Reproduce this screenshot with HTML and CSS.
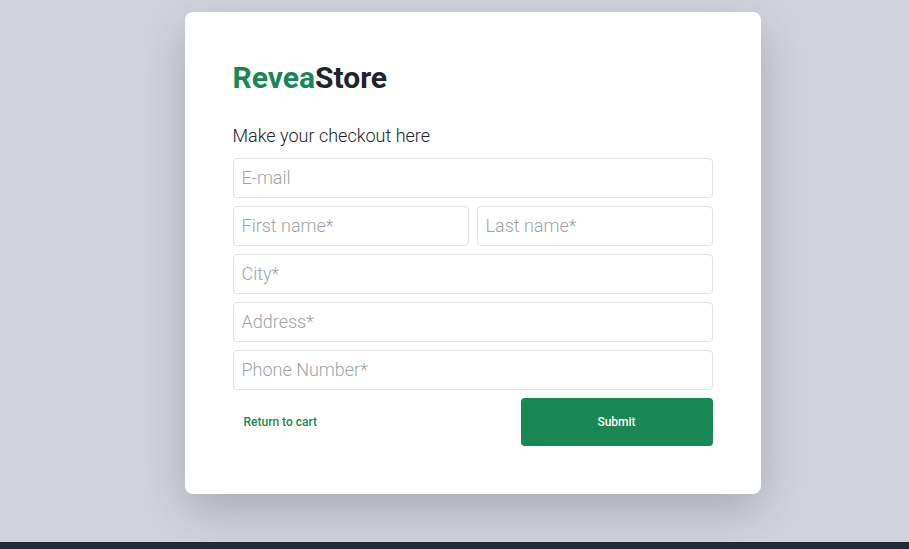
FILE: index.html
```html
<!DOCTYPE html>
<html lang="en">
<head>
<meta charset="utf-8">
<meta name="viewport" content="width=device-width, initial-scale=1">
<title>ReveaStore</title>
<link rel="stylesheet" href="styles.css">
</head>
<body>
<main class="page">
  <section class="card">
    <h1 class="brand"><span class="brand-accent">Revea</span>Store</h1>
    <h2 class="subtitle">Make your checkout here</h2>
    <form class="form">
      <input class="field wide" type="email" placeholder="E-mail" aria-label="E-mail">
      <input class="field" type="text" placeholder="First name*" aria-label="First name">
      <input class="field" type="text" placeholder="Last name*" aria-label="Last name">
      <input class="field wide" type="text" placeholder="City*" aria-label="City">
      <input class="field wide" type="text" placeholder="Address*" aria-label="Address">
      <input class="field wide" type="tel" placeholder="Phone Number*" aria-label="Phone Number">
      <div class="actions wide">
        <a class="back" href="#">Return to cart</a>
        <button class="submit" type="submit">Submit</button>
      </div>
    </form>
  </section>
</main>
<footer class="footer"></footer>
</body>
</html>
```
FILE: styles.css
```css
* {
  box-sizing: border-box;
}

body {
  display: flex;
  flex-direction: column;
  min-height: 100vh;
  margin: 0;
  background: #d1d4dd;
  color: #212529;
  font-family: Roboto, sans-serif;
}

.page {
  flex: 1;
  padding: 12px 12px 48px 48px;
}

.card {
  max-width: 576px;
  margin: 0 auto;
  padding: 48px;
  border-radius: 8px;
  background: #fff;
  box-shadow: 0 16px 48px rgba(0, 0, 0, 0.2);
}

.brand {
  margin: 0;
  font-size: 30px;
  font-weight: 700;
  line-height: 36px;
}

.brand-accent {
  color: #198754;
}

.subtitle {
  margin: 26px 0 8px;
  font-size: 18px;
  font-weight: 300;
  line-height: 28px;
}

.form {
  display: grid;
  grid-template-columns: 1fr 1fr;
  gap: 8px;
}

.wide {
  grid-column: 1 / -1;
}

.field {
  width: 100%;
  min-width: 0;
  height: 40px;
  padding: 0 8px 2px;
  border: 1px solid #dee0e6;
  border-radius: 4px;
  background: #fff;
  color: #212529;
  font: 300 18px/28px Roboto, sans-serif;
}

.field::placeholder {
  color: #9ca3af;
  opacity: 1;
}

.actions {
  display: flex;
  align-items: center;
  justify-content: space-between;
}

.back {
  padding: 0 11px;
  color: #198754;
  font-size: 12px;
  font-weight: 500;
  text-decoration: none;
}

.submit {
  width: 40%;
  height: 48px;
  border: 0;
  border-radius: 4px;
  background: #198754;
  color: #fff;
  font: 500 12px/16px Roboto, sans-serif;
}

.footer {
  height: 7px;
  background: #212936;
}
```
